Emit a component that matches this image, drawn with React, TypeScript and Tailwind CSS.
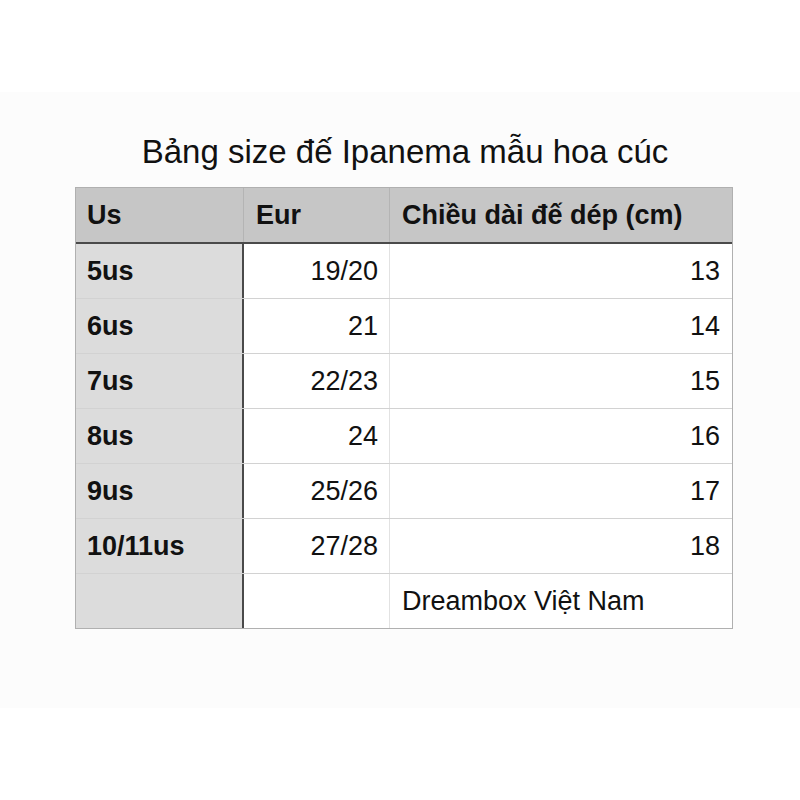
const rows = [
  { us: '5us', eur: '19/20', len: '13' },
  { us: '6us', eur: '21', len: '14' },
  { us: '7us', eur: '22/23', len: '15' },
  { us: '8us', eur: '24', len: '16' },
  { us: '9us', eur: '25/26', len: '17' },
  { us: '10/11us', eur: '27/28', len: '18' },
];

export default function App() {
  return (
    <div className="w-[800px] h-[800px] bg-white text-[#111] font-['Liberation_Sans',Arial,sans-serif]">
      <div className="h-[92px]" />
      <div className="h-[616px] bg-[#fcfcfc] flex flex-col items-start pl-[75px]">
        <h1 className="mt-[42px] h-[53px] w-[658px] text-[33px] leading-[36px] text-center pl-[2px]">
          Bảng size đế Ipanema mẫu hoa cúc
        </h1>
        <div className="w-[658px] border border-[#b0b0b0] text-[27px]">
          <div className="grid grid-cols-[168px_146px_342px] h-[56px] bg-[#c6c6c6] border-b-2 border-[#4a4a4a] font-bold">
            <div className="pl-[11px] flex items-center border-r border-[#b4b4b4]">Us</div>
            <div className="pl-[12px] flex items-center border-r border-[#b4b4b4]">Eur</div>
            <div className="pl-[12px] flex items-center">Chiều dài đế dép (cm)</div>
          </div>
          {rows.map((r) => (
            <div key={r.us} className="grid grid-cols-[168px_146px_342px] h-[55px] border-b border-[#d2d2d2]">
              <div className="pl-[11px] flex items-center bg-[#dcdcdc] border-r-2 border-[#4a4a4a] font-bold">{r.us}</div>
              <div className="pr-[11px] flex items-center justify-end bg-white border-r border-[#e2e2e2]">{r.eur}</div>
              <div className="pr-[12px] flex items-center justify-end bg-white">{r.len}</div>
            </div>
          ))}
          <div className="grid grid-cols-[168px_146px_342px] h-[54px]">
            <div className="bg-[#dcdcdc] border-r-2 border-[#4a4a4a]" />
            <div className="bg-white border-r border-[#e2e2e2]" />
            <div className="pl-[12px] flex items-center bg-white">Dreambox Việt Nam</div>
          </div>
        </div>
      </div>
    </div>
  );
}
